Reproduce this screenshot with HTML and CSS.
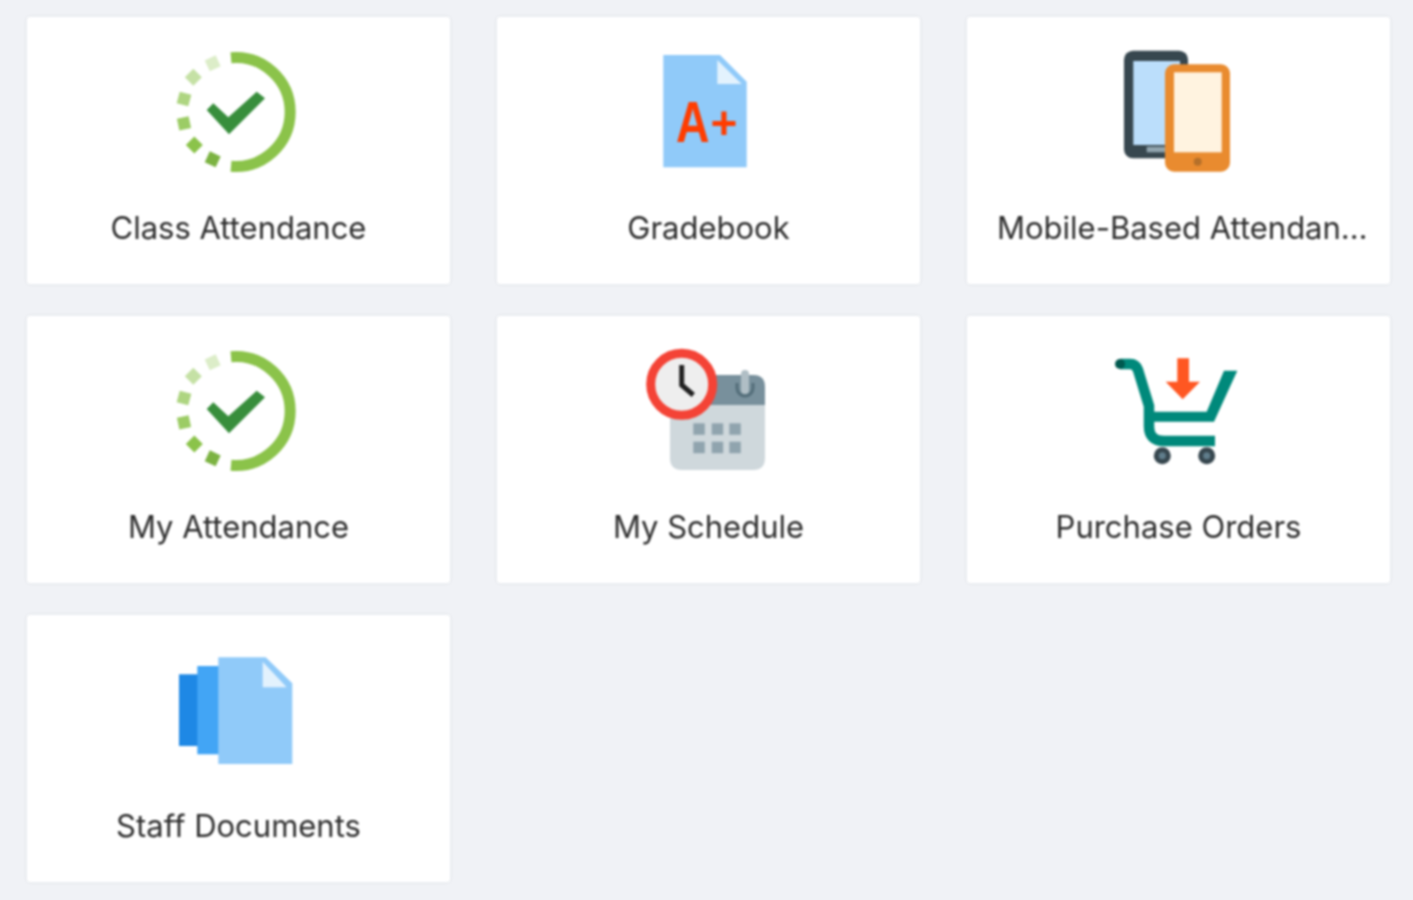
FILE: index.html
```html
<!DOCTYPE html>
<html lang="en">
<head>
    <meta charset="UTF-8">
    <meta name="viewport" content="width=device-width, initial-scale=1.0">
    <title>Apps</title>
    <link rel="stylesheet" href="styles.css">
</head>
<body>
    <svg class="sprite" width="0" height="0">
        <symbol id="attendance" viewBox="0 0 141 130">
            <path d="M63 10.7A54.5 54.5 0 1 1 63 119.3" fill="none" stroke="#8bc34a" stroke-width="11"/>
            <rect x="38.7" y="10.3" width="12" height="12" fill="#dcedc8" transform="rotate(-25 44.7 16.3)"/>
            <rect x="19.3" y="24.3" width="12" height="12" fill="#c5e1a5" transform="rotate(-45 25.3 30.3)"/>
            <rect x="10" y="46" width="12" height="12" fill="#aed581" transform="rotate(15 16 52)"/>
            <rect x="10" y="70.3" width="12" height="12" fill="#9ccc65" transform="rotate(-12 16 76.3)"/>
            <rect x="20.3" y="92" width="12" height="12" fill="#8bc34a" transform="rotate(45 26.3 98)"/>
            <rect x="38.7" y="106.3" width="12" height="12" fill="#7cb342" transform="rotate(25 44.7 112.3)"/>
            <path d="M38.7 63L45.3 56.3 60.3 70.3 88.7 44.7 97 51.3 61 87.3Z" fill="#388e3c"/>
        </symbol>
    </svg>

    <main class="app-grid">
        <a class="app-card">
            <svg class="app-icon" viewBox="0 0 141 130"><use href="#attendance"/></svg>
            <span class="app-label">Class Attendance</span>
        </a>
        <a class="app-card">
            <svg class="app-icon" viewBox="0 0 141 130">
                <path d="M25.3 8H82L108.7 34.7V120.3H25.3Z" fill="#90caf9"/>
                <path d="M79.3 13L103.7 37H79.3Z" fill="#e3f2fd"/>
                <text class="grade-letter" transform="translate(38 94.7) scale(0.8 1)">A</text>
                <text class="grade-plus" x="72.5" y="92">+</text>
            </svg>
            <span class="app-label">Gradebook</span>
        </a>
        <a class="app-card">
            <svg class="app-icon" viewBox="0 0 141 130">
                <rect x="16" y="3.7" width="64" height="107.6" rx="9" fill="#37474f"/>
                <rect x="25.3" y="14" width="46.7" height="84" fill="#bbdefb"/>
                <rect x="38.7" y="99.7" width="18.3" height="5.6" fill="#90a4ae"/>
                <rect x="57" y="17.3" width="65" height="107.4" rx="9" fill="#e98b2f"/>
                <rect x="66" y="25.3" width="47.7" height="80" fill="#fff3e0"/>
                <circle cx="89.7" cy="114.7" r="4" fill="#b5702a"/>
            </svg>
            <span class="app-label app-label-long">Mobile-Based Attendance</span>
        </a>
        <a class="app-card">
            <svg class="app-icon" viewBox="0 0 141 130"><use href="#attendance"/></svg>
            <span class="app-label">My Attendance</span>
        </a>
        <a class="app-card">
            <svg class="app-icon" viewBox="0 0 141 130">
                <path d="M44 29H115Q127 29 127 41V112Q127 124 115 124H44Q32 124 32 112V41Q32 29 44 29Z" fill="#cfd8dc"/>
                <path d="M44 29H115Q127 29 127 41V59H32V41Q32 29 44 29Z" fill="#78909c"/>
                <path d="M99 37V42A8 8 0 0 0 115 42V37" fill="none" stroke="#546e7a" stroke-width="3"/>
                <rect x="103" y="24" width="8" height="24" rx="4" fill="#b0bec5"/>
                <g fill="#90a4ae">
                    <rect x="55.3" y="77.3" width="11.5" height="11.5"/>
                    <rect x="73.7" y="77.3" width="11.5" height="11.5"/>
                    <rect x="91.3" y="77.3" width="11.5" height="11.5"/>
                    <rect x="55.3" y="95.7" width="11.5" height="11.5"/>
                    <rect x="73.7" y="95.7" width="11.5" height="11.5"/>
                    <rect x="91.3" y="95.7" width="11.5" height="11.5"/>
                </g>
                <circle cx="43.7" cy="38.3" r="31" fill="#eeeeee" stroke="#f44336" stroke-width="9"/>
                <path d="M43.7 19V39L55.3 49" fill="none" stroke="#212121" stroke-width="5"/>
            </svg>
            <span class="app-label">My Schedule</span>
        </a>
        <a class="app-card">
            <svg class="app-icon" viewBox="0 0 141 130">
                <path d="M12 18H22Q28 18 30 24L41 60V80Q41 95 56 95H107" fill="none" stroke="#00897b" stroke-width="10.5"/>
                <path d="M116 24.7H129.3L106 75.7H44V65.7H98.7Z" fill="#00897b"/>
                <circle cx="12" cy="18" r="5" fill="#00594f"/>
                <circle cx="54.3" cy="109.7" r="8.5" fill="#37474f"/>
                <circle cx="98.7" cy="109.7" r="8.5" fill="#37474f"/>
                <circle cx="54.3" cy="109.7" r="3.5" fill="#607d8b"/>
                <circle cx="98.7" cy="109.7" r="3.5" fill="#607d8b"/>
                <path d="M69.3 12.3H81V35.7H92L74.7 53.3 57.7 35.7H69.3Z" fill="#ff5722"/>
            </svg>
            <span class="app-label">Purchase Orders</span>
        </a>
        <a class="app-card">
            <svg class="app-icon" viewBox="0 0 141 130">
                <rect x="11" y="29.3" width="20" height="71.7" fill="#1e88e5"/>
                <rect x="29.3" y="21" width="23" height="88.3" fill="#42a5f5"/>
                <path d="M50.3 12.3H97.7L124.3 38.3V119H50.3Z" fill="#90caf9"/>
                <path d="M94.7 16.7L118.7 42.3H94.7Z" fill="#e3f2fd"/>
            </svg>
            <span class="app-label">Staff Documents</span>
        </a>
    </main>
</body>
</html>
```

FILE: styles.css
```css
html, body {
    height: 100%;
}

body {
    margin: 0;
    background: #f0f2f6;
    font-family: "Inter", "Open Sans", sans-serif;
    overflow: hidden;
}

.sprite {
    display: none;
}

.app-grid {
    display: grid;
    grid-template-columns: repeat(3, 423px);
    grid-auto-rows: 267px;
    column-gap: 47px;
    row-gap: 32px;
    padding: 17px 0 0 27px;
    filter: blur(0.9px);
}

.app-card {
    display: flex;
    flex-direction: column;
    align-items: center;
    box-sizing: border-box;
    padding: 30px 30px 0;
    background: #fff;
    border-radius: 3px;
    box-shadow: 0 0 4px rgba(40, 50, 70, 0.08);
}

.app-icon {
    width: 141px;
    height: 130px;
    flex: none;
}

.app-label {
    width: 100%;
    margin-top: 31px;
    font-size: 31px;
    line-height: 40px;
    color: #2e2e2e;
    text-align: center;
    white-space: nowrap;
    overflow: hidden;
    text-overflow: ellipsis;
}

.app-label-long {
    align-self: flex-start;
    width: calc(100% + 9px);
}

.grade-letter {
    font-family: "Liberation Sans", sans-serif;
    font-size: 58px;
    font-weight: 700;
    fill: #ff3d00;
}

.grade-plus {
    font-family: "Liberation Sans", sans-serif;
    font-size: 46px;
    font-weight: 700;
    fill: #ff3d00;
}
```
